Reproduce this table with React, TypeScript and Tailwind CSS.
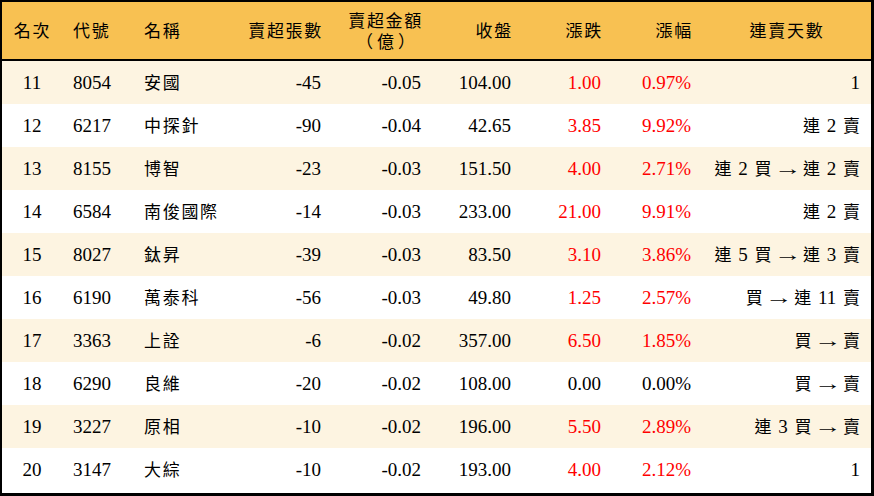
import React from "react";

type Row = {
  rank: string;
  code: string;
  name: string;
  lots: string;
  amt: string;
  close: string;
  chg: string;
  pct: string;
  streak: string;
};

const rows: Row[] = [
  { rank: "11", code: "8054", name: "安國", lots: "-45", amt: "-0.05", close: "104.00", chg: "1.00", pct: "0.97%", streak: "1" },
  { rank: "12", code: "6217", name: "中探針", lots: "-90", amt: "-0.04", close: "42.65", chg: "3.85", pct: "9.92%", streak: "連 2 賣" },
  { rank: "13", code: "8155", name: "博智", lots: "-23", amt: "-0.03", close: "151.50", chg: "4.00", pct: "2.71%", streak: "連 2 買 → 連 2 賣" },
  { rank: "14", code: "6584", name: "南俊國際", lots: "-14", amt: "-0.03", close: "233.00", chg: "21.00", pct: "9.91%", streak: "連 2 賣" },
  { rank: "15", code: "8027", name: "鈦昇", lots: "-39", amt: "-0.03", close: "83.50", chg: "3.10", pct: "3.86%", streak: "連 5 買 → 連 3 賣" },
  { rank: "16", code: "6190", name: "萬泰科", lots: "-56", amt: "-0.03", close: "49.80", chg: "1.25", pct: "2.57%", streak: "買 → 連 11 賣" },
  { rank: "17", code: "3363", name: "上詮", lots: "-6", amt: "-0.02", close: "357.00", chg: "6.50", pct: "1.85%", streak: "買 → 賣" },
  { rank: "18", code: "6290", name: "良維", lots: "-20", amt: "-0.02", close: "108.00", chg: "0.00", pct: "0.00%", streak: "買 → 賣" },
  { rank: "19", code: "3227", name: "原相", lots: "-10", amt: "-0.02", close: "196.00", chg: "5.50", pct: "2.89%", streak: "連 3 買 → 賣" },
  { rank: "20", code: "3147", name: "大綜", lots: "-10", amt: "-0.02", close: "193.00", chg: "4.00", pct: "2.12%", streak: "1" },
];

const CJK_RUN = /(→|[\u3400-\u9fff\uff00-\uffef]+)/;
const CJK_TEST = /[\u3400-\u9fff\uff00-\uffef]/;

function Cjk({ text, wide = false }: { text: string; wide?: boolean }) {
  const parts = text.split(CJK_RUN);
  return (
    <>
      {parts.map((p, i) => {
        if (p === "→") {
          return (
            <span key={i} className="inline-block w-[18px] text-center scale-x-[1.45]">
              →
            </span>
          );
        }
        return CJK_TEST.test(p) ? (
          <span
            key={i}
            className={wide ? "text-[17px] tracking-[1.7px]" : "text-[17px]"}
            style={{ fontFamily: '"Noto Sans CJK TC", sans-serif' }}
          >
            {p}
          </span>
        ) : (
          <span key={i}>{p}</span>
        );
      })}
    </>
  );
}

const grid =
  "grid grid-cols-[60px_72px_96px_101px_100px_90px_90px_90px_1fr] items-center";

export default function App() {
  return (
    <div
      className="w-[874px] h-[496px] bg-white border-l-2 border-t-2 border-r-[3px] border-b-[3px] border-black text-black text-[19px] leading-none"
      style={{ fontFamily: '"Liberation Serif", "Noto Sans CJK TC", serif' }}
    >
      <div className={`${grid} h-[59px] bg-[#f8c152] border-b-2 border-black`}>
        <div className="text-center pl-[1px]"><Cjk text="名次" wide /></div>
        <div className="pl-[11px]"><Cjk text="代號" wide /></div>
        <div className="pl-[10px]"><Cjk text="名稱" wide /></div>
        <div className="text-right pr-[8px]"><Cjk text="賣超張數" wide /></div>
        <div className="text-right pr-[8px]">
          <div className="inline-flex flex-col items-center leading-[20px]">
            <span><Cjk text="賣超金額" wide /></span>
            <span className="tracking-[4px] pl-[4px]"><Cjk text="（億）" /></span>
          </div>
        </div>
        <div className="text-right pr-[8px]"><Cjk text="收盤" wide /></div>
        <div className="text-right pr-[8px]"><Cjk text="漲跌" wide /></div>
        <div className="text-right pr-[8px]"><Cjk text="漲幅" wide /></div>
        <div className="text-center pl-[2px]"><Cjk text="連賣天數" wide /></div>
      </div>
      {rows.map((r, i) => {
        const up = parseFloat(r.chg) > 0;
        const color = up ? "text-[#ff0000]" : "text-black";
        return (
          <div
            key={r.rank}
            className={`${grid} h-[43px] ${i % 2 === 0 ? "bg-[#fdf4e1]" : "bg-white"}`}
          >
            <div className="text-center">{r.rank}</div>
            <div className="pl-[11px]">{r.code}</div>
            <div className="pl-[10px]"><Cjk text={r.name} wide /></div>
            <div className="text-right pr-[10px]">{r.lots}</div>
            <div className="text-right pr-[10px]">{r.amt}</div>
            <div className="text-right pr-[10px]">{r.close}</div>
            <div className={`text-right pr-[10px] ${color}`}>{r.chg}</div>
            <div className={`text-right pr-[10px] ${color}`}>{r.pct}</div>
            <div className="text-right pr-[11px] whitespace-nowrap [word-spacing:2px]"><Cjk text={r.streak} /></div>
          </div>
        );
      })}
    </div>
  );
}
